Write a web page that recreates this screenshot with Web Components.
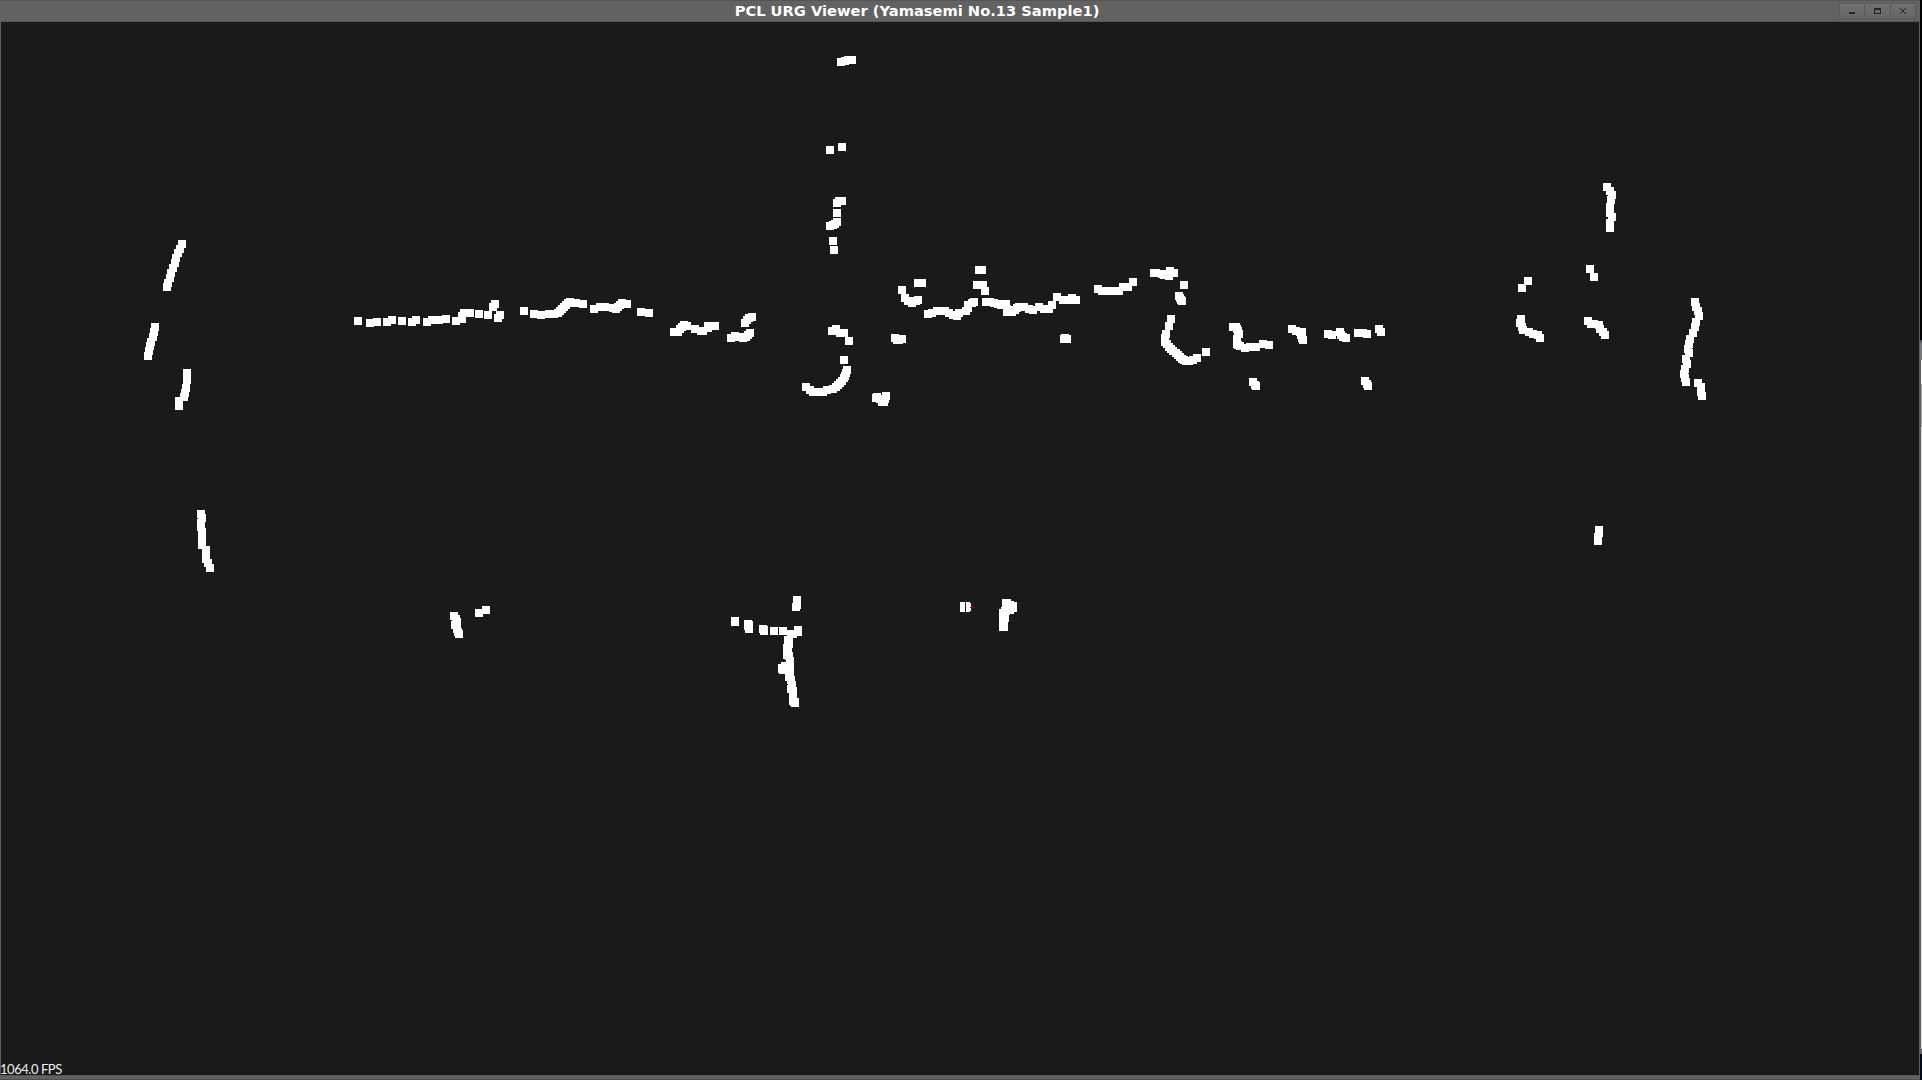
<!DOCTYPE html>
<html lang="en"><head><meta charset="utf-8"><title>PCL URG Viewer</title>
<style>html,body{margin:0;width:1922px;height:1080px;overflow:hidden;background:#000}</style></head>
<body>
<viewer-window>
  <title-bar slot="title">PCL URG Viewer (Yamasemi No.13 Sample1)</title-bar>
  <point-cloud><fps-label slot="overlay">1064.0 FPS</fps-label></point-cloud>
</viewer-window>
<script>
class ViewerWindow extends HTMLElement{
  constructor(){super();this.attachShadow({mode:'open'}).innerHTML=`<style>
  :host{display:flex;width:1922px;height:1080px;background:#000}
  .frame{display:flex;flex-direction:column;width:1920px;height:1080px;background:#5b5b5b}
  .body{display:flex;flex:1;padding:0 1px 0 1px;min-height:0}
  .bottom{height:5px;background:linear-gradient(#555 0 1px,#626262 1px 4px,#505050 4px)}
  .edge{display:flex;flex-direction:column;width:2px}
  .edge i{display:block}
  </style><div class="frame"><slot name="title"></slot><div class="body"><slot></slot></div><div class="bottom"></div></div>
  <div class="edge"><i style="height:340px;background:#000"></i><i style="height:20px;background:linear-gradient(#33475a,#777 4px)"></i>
  <i style="height:24px;background:linear-gradient(90deg,#606060 1px,#f4f4f4 1px)"></i>
  <i style="height:43px;background:linear-gradient(90deg,#606060 1px,#aaa 1px)"></i>
  <i style="height:622px;background:linear-gradient(90deg,#606060 1px,#e0e0e0 1px)"></i>
  <i style="height:5px;background:#666"></i><i style="height:26px;background:#020818"></i></div>`}
}
class TitleBar extends HTMLElement{
  constructor(){super();this.attachShadow({mode:'open'}).innerHTML=`<style>
  :host{display:flex;box-sizing:border-box;height:22px;align-items:flex-start;padding:4px 5px 0 0;background:linear-gradient(#555 0 1px,#626262 1px 21px,#555 21px);color:#fff;font:bold 14.67px/15px "DejaVu Sans",sans-serif}
  .t{flex:1;text-align:center;padding-right:6px;margin-top:-1px;white-space:nowrap}
  .b{display:flex;gap:1px}
  </style><div class="t"><slot></slot></div><div class="b"><window-button kind="min"></window-button><window-button kind="max"></window-button><window-button kind="close"></window-button></div>`}
}
class WindowButton extends HTMLElement{
  constructor(){super();const d={
   min:'M9 8h6v2h-6z',
   max:'M9 4h7v6h-7zM10 6v3h5v-3z',
   close:'M9 4h1v1h-1zM10 5h1v1h-1zM11 6h1v1h-1zM12 6h1v1h-1zM13 5h1v1h-1zM14 4h1v1h-1zM11 7h2v1h-2zM10 8h1v1h-1zM9 9h1v1h-1zM13 8h1v1h-1zM14 9h1v1h-1z'}[this.getAttribute('kind')];
   this.attachShadow({mode:'open'}).innerHTML=`<style>:host{display:block;box-sizing:border-box;width:24.33px;height:14px;background:linear-gradient(#707070,#666);box-shadow:0 0 0 1px #5a5a5a}svg{display:block}</style><svg width="24" height="14" shape-rendering="crispEdges"><path d="${d}" fill="#242424" fill-rule="evenodd"/></svg>`}
}
/* Each pair is the top-left corner of one 8px point, in window coordinates. */
const POINTS=`178,240 176,245 174,249 172,254 171,259 169,264 167,269 166,274 164,279 163,283
151,323 150,328 149,333 147,338 146,342 145,347 144,352
183,369 183,376 182,384 181,389 180,393 175,397 175,402
197,510 198,514 197,519 197,523 198,528 198,534 198,541 202,546 202,551 202,555 204,559 206,564
354,317 366,319 373,318 383,318 388,316 398,317 408,318 412,316 423,318 428,316 435,316 442,315 452,317 458,312 458,315 460,309 466,309 475,310 484,311 489,303 491,300 496,311 494,314
520,307 530,310 537,311 545,310 550,310 554,309 556,307 558,305 560,303 562,301 564,299 566,298 572,299 579,300
590,305 596,303 601,303 609,304 612,305 614,303 616,301 618,299 623,300 637,308 645,309
670,328 674,328 676,325 678,323 680,321 683,322 691,325 697,327 699,327 704,324 704,322 711,322
741,319 743,316 745,314 748,313 727,334 731,332 735,333 739,334 742,333 744,331 746,329
837,58 841,57 844,56 848,56 826,146 838,143 833,199 835,197 838,197 833,209 826,222 829,221 831,220 833,218 829,237 830,246
975,266 978,266 914,279 918,279 973,281 979,281 981,287 898,286 901,294 904,297 908,299 912,297 914,296
924,310 928,309 933,307 941,307 945,309 949,311 953,312 955,309 962,307 964,301 964,304 968,299 970,298
982,298 986,298 990,299 994,300 997,301 1002,300 1003,305 1003,308 1008,308 1011,306 1013,304 1015,303 1020,303 1025,305 1029,306 1035,303 1040,305 1045,305 1048,301 1053,293 1059,296 1064,296 1068,294 1072,296
828,327 832,325 836,329 840,329 845,337 891,334 893,336 895,336 898,335 840,356
843,366 842,369 841,372 840,374 838,377 836,379 834,381 832,383 829,385 823,386 819,388 814,388 809,388 806,386 802,383
872,394 873,393 878,398 880,398 876,395 882,392 881,395 1060,335 1061,334 1063,335
1094,285 1098,287 1104,287 1110,287 1115,287 1119,283 1124,283 1129,278 1150,269 1152,269 1158,270 1160,271 1165,272 1166,267 1170,269 1180,281 1175,292 1176,294 1177,296 1178,297
1167,315 1165,322 1162,330 1161,334 1161,338 1163,340 1165,343 1167,345 1169,347 1172,349 1174,351 1176,353 1178,355 1180,356 1182,357 1185,357 1189,356 1193,354 1202,348
1229,323 1232,323 1233,325 1234,327 1235,330 1233,335 1233,340 1234,341 1236,342 1241,344 1246,343 1252,343 1259,340 1265,341
1288,325 1292,327 1296,328 1298,328 1297,331 1298,334 1299,336 1324,330 1328,331 1336,328 1337,331 1339,333 1342,334 1354,329 1359,329 1363,330 1375,325 1377,328
1249,378 1251,381 1252,382 1361,377 1363,380 1364,382
1603,183 1606,187 1608,191 1607,196 1606,203 1606,209 1608,213 1606,219 1606,224 1586,265 1590,273 1524,277 1518,284
1517,315 1516,319 1518,323 1519,326 1525,328 1529,330 1534,331 1536,334 1584,317 1587,320 1590,320 1595,321 1596,325 1599,328 1601,331
1691,298 1692,303 1694,307 1695,312 1692,318 1691,323 1689,329 1686,335 1685,340 1684,345 1685,349 1682,355 1683,360 1681,365 1680,370 1681,374 1682,378 1694,379 1697,383 1697,388 1698,392 1595,526 1595,529 1594,533 1594,537
450,612 452,615 453,618 451,621 453,625 454,628 455,630 475,609 482,606
793,596 793,601 792,603 731,617 731,618 744,620 745,621 744,622 745,625 759,625 760,626 760,627 770,627 779,627 787,630 789,630 794,626 794,628
784,636 785,636 784,640 785,640 783,644 784,644 783,651 784,650 785,652 786,657 786,659 781,662 778,664 779,666 778,665 786,665 786,669 785,673 787,676 788,681 787,685 789,687 789,690 789,695 789,697 791,698 791,699 790,698
960,602 960,604 962,602 962,604 963,603 1002,599 1003,599 1006,601 1009,602 1009,604 1006,606 1002,607 1001,607 1000,609 999,609 999,615 1001,614 999,623 1000,623 1000,618`;
class PointCloud extends HTMLElement{
  constructor(){super();const d=POINTS.split(/\s+/).map(p=>`M${p.replace(',',' ')}h8v8h-8z`).join('');
  this.attachShadow({mode:'open'}).innerHTML=`<style>
  :host{display:grid;width:1918px;height:1053px;background:#1a1a1a}
  svg,slot{grid-area:1/1}svg{display:block}
  slot{display:flex;align-items:flex-end}
  </style><svg width="1918" height="1053" viewBox="1 22 1918 1053" shape-rendering="crispEdges"><path d="${d}" fill="#fff"/>
  <path d="M965 602h1v5h-1z" fill="#064006"/><path d="M965 607h1v7h-1z" fill="#00005a"/><path d="M970 607h5v1h-5z" fill="#a00000"/><path d="M975 607h4v1h-4z" fill="#600"/><path d="M964 588h1v1h-1z" fill="#000"/></svg><slot name="overlay"></slot>`}
}
class FpsLabel extends HTMLElement{
  constructor(){super();this.attachShadow({mode:'open'}).innerHTML=`<style>:host{display:block;margin-left:-1px;color:#eee;font:13px/12px Lato,sans-serif;letter-spacing:-.45px;white-space:nowrap}</style><slot></slot>`}
}
customElements.define('window-button',WindowButton);
customElements.define('fps-label',FpsLabel);
customElements.define('point-cloud',PointCloud);
customElements.define('title-bar',TitleBar);
customElements.define('viewer-window',ViewerWindow);
</script></body></html>
